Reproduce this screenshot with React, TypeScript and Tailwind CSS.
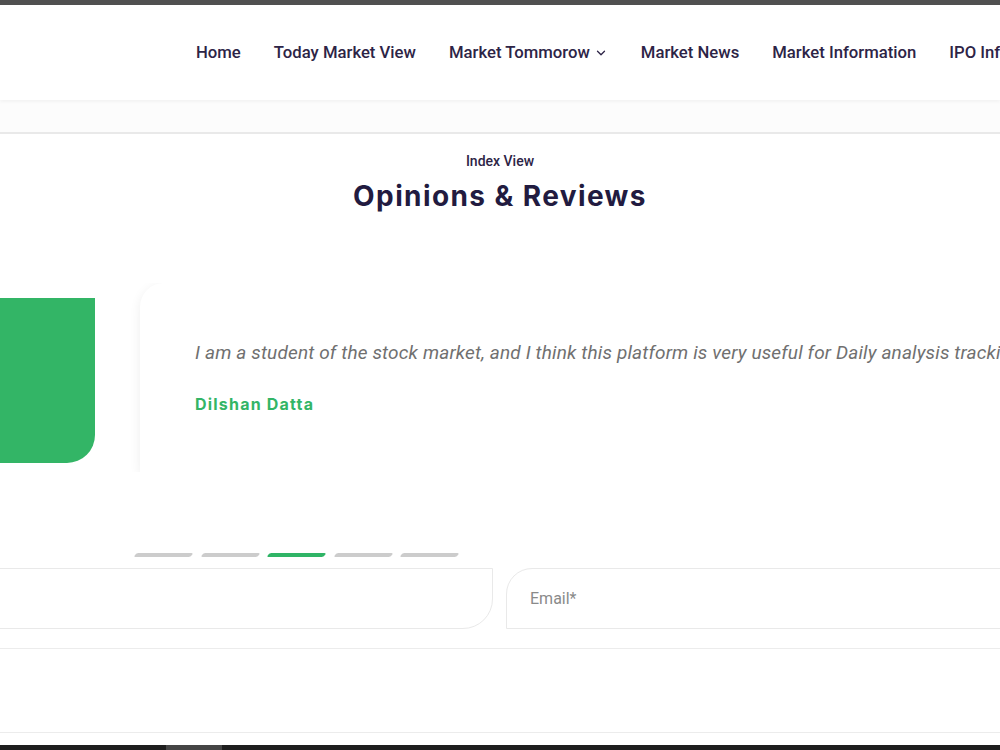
import { ChevronDown } from 'lucide-react'

const navItems = [
  { label: 'Home' },
  { label: 'Today Market View' },
  { label: 'Market Tommorow', dropdown: true },
  { label: 'Market News' },
  { label: 'Market Information' },
  { label: 'IPO Information' },
]

const slides = [false, false, true, false, false]

export default function App() {
  return (
    <div className="w-full h-[750px] overflow-hidden bg-white flex flex-col font-['Roboto',sans-serif]">
      {/* window strip */}
      <div className="h-[5px] bg-[#505050] shrink-0" />

      {/* Header */}
      <header className="h-[95px] shrink-0 bg-white flex items-center pl-[196px] whitespace-nowrap overflow-hidden shadow-[0_2px_3px_rgba(0,0,0,0.04)] relative z-10">
        <nav className="flex items-center gap-[33px] text-[16.7px] font-medium text-[#2d2446]">
          {navItems.map((item) => (
            <a key={item.label} href="#" className="flex items-center gap-[4px]">
              {item.label}
              {item.dropdown && <ChevronDown className="w-[14px] h-[14px] mt-[2px]" strokeWidth={2.2} />}
            </a>
          ))}
        </nav>
      </header>

      <div className="h-[34px] shrink-0 bg-[#fcfcfc] border-b-2 border-[#e9e9e9]" />

      {/* Testimonials */}
      <section className="flex flex-col shrink-0">
        <div className="text-center pt-[17px]">
          <p className="text-sm font-medium text-[#2d2446]">Index View</p>
          <h2 className="mt-[7px] text-[28px] leading-[36px] font-bold tracking-[1.4px] text-[#221b40] font-['Inter',sans-serif]">
            Opinions &amp; Reviews
          </h2>
        </div>

        <div className="flex items-start mt-[69px] overflow-hidden">
          <div className="w-[95px] h-[165px] mt-[15px] shrink-0 bg-[#33b566] rounded-br-[28px]" />
          <div className="ml-[45px] w-[900px] h-[189px] shrink-0 bg-white rounded-tl-[24px] shadow-[0_3px_12px_rgba(0,0,0,0.07)] pl-[55px] pt-[58px] whitespace-nowrap">
            <p className="text-[19px] tracking-[0.15px] italic text-[#707070] leading-6">
              I am a student of the stock market, and I think this platform is very useful for Daily analysis tracking.
            </p>
            <p className="mt-[27px] text-base font-bold tracking-[1.2px] text-[#33b566] font-['Inter',sans-serif]">Dilshan Datta</p>
          </div>
        </div>

        <div className="flex gap-[9.5px] pl-[135px] mt-[81px]">
          {slides.map((active, i) => (
            <span
              key={i}
              className={`block w-[57px] h-[4px] rounded-[2px] -skew-x-[35deg] ${active ? 'bg-[#2fb466]' : 'bg-[#cccccc]'}`}
            />
          ))}
        </div>
      </section>

      {/* Contact form */}
      <form className="flex flex-col mt-[11px] shrink-0">
        <div className="flex gap-[13px] -ml-[10px]">
          <input
            className="w-[503px] h-[61px] shrink-0 border border-[#e9e9e9] rounded-br-[30px] outline-none"
            placeholder=""
          />
          <input
            className="w-[520px] h-[61px] shrink-0 border border-[#e9e9e9] rounded-tl-[26px] pl-[23px] text-base text-[#555] placeholder:text-[#8a8a8a] outline-none"
            placeholder="Email*"
          />
        </div>
        <textarea className="mt-[19px] -mx-[10px] h-[85px] border-y border-[#ececec] resize-none outline-none" />
      </form>

      <div className="flex-1" />
      <div className="h-[5px] shrink-0 bg-[#1e1e1e] flex">
        <span className="ml-[166px] w-[56px] bg-[#454545]" />
      </div>
    </div>
  )
}
